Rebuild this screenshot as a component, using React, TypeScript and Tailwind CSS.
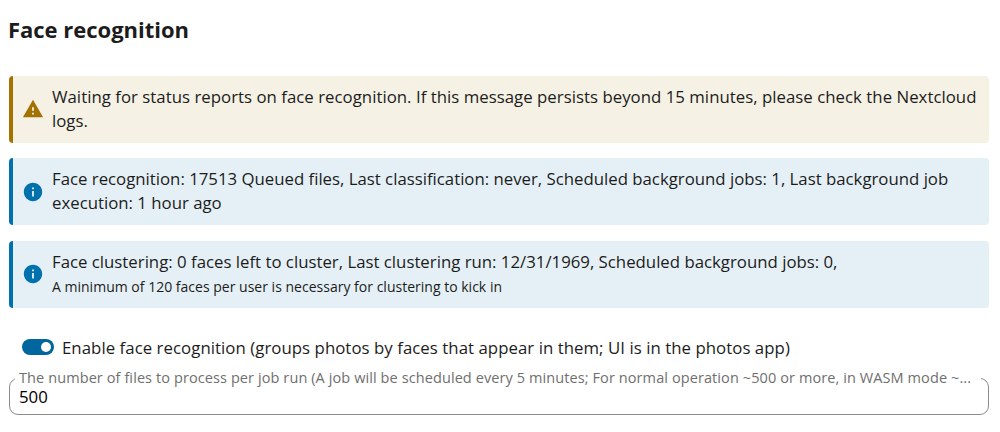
import type { ReactNode } from "react";
import { MdInfo, MdWarning } from "react-icons/md";

type NoteCardProps = {
  type: "warning" | "info";
  children: ReactNode;
};

function NoteCard({ type, children }: NoteCardProps) {
  const isWarning = type === "warning";
  return (
    <section
      className={`flex h-[67px] items-center rounded border-l-4 ${
        isWarning
          ? "border-[#a37200] bg-[#f5f1e4]"
          : "border-[#0071ad] bg-[#e5f0f6]"
      }`}
    >
      <span className="ml-[9px] flex w-[22px] justify-center">
        {isWarning ? (
          <MdWarning className="h-[22px] w-[22px] text-[#a37200]" />
        ) : (
          <MdInfo className="h-[22px] w-[22px] text-[#0071ad]" />
        )}
      </span>
      <div className="ml-2 pb-[0.4px] whitespace-nowrap leading-6">
        {children}
      </div>
    </section>
  );
}

function App() {
  return (
    <main className="h-[432px] overflow-hidden bg-white pl-[9px] pr-[11px] pt-[13px] font-['Open_Sans','Noto_Sans',sans-serif] text-[16.8px] text-[#1c1c1c]">
      <h2 className="-ml-px h-[62.6px] text-[22px] leading-8 font-bold tracking-[-0.02px]">
        Face recognition
      </h2>

      <div className="flex flex-col gap-[15.5px]">
        <NoteCard type="warning">
          <p className="tracking-[0.025px]">
            Waiting for status reports on face recognition. If this message
            persists beyond 15 minutes, please check the Nextcloud
          </p>
          <p>logs.</p>
        </NoteCard>
        <NoteCard type="info">
          <p className="tracking-[-0.005px]">
            Face recognition: 17513 Queued files, Last classification: never,
            Scheduled background jobs: 1, Last background job
          </p>
          <p>execution: 1 hour ago</p>
        </NoteCard>
        <NoteCard type="info">
          <p>
            Face clustering: 0 faces left to cluster, Last clustering run:
            12/31/1969, Scheduled background jobs: 0,
          </p>
          <p className="pt-px text-[14px] leading-[23px] tracking-[0.01px]">
            A minimum of 120 faces per user is necessary for clustering to kick
            in
          </p>
        </NoteCard>
      </div>

      <label className="mt-7 ml-[13px] flex h-6 items-center gap-2 whitespace-nowrap tracking-[0.05px]">
        <span className="-mt-px flex h-4 w-8 shrink-0 items-center justify-end rounded-full bg-[#00679e] pr-[3px]">
          <span className="h-2.5 w-2.5 rounded-full bg-white" />
        </span>
        Enable face recognition (groups photos by faces that appear in them; UI
        is in the photos app)
      </label>

      <div className="relative mt-[18px] h-[37px] rounded-[9px] border border-[#8c8c8c]">
        <label className="absolute -top-[11px] right-[7px] left-[5px] block bg-white pl-1 text-[14.5px] leading-5 tracking-[0.095px] whitespace-nowrap text-[#6f6f6f]">
          The number of files to process per job run (A job will be scheduled
          every 5 minutes; For normal operation ~500 or more, in WASM mode ~...
        </label>
        <input
          type="text"
          defaultValue="500"
          className="mt-[6px] block h-6 w-full bg-transparent pl-[9px] text-[16.8px] text-black outline-none"
        />
      </div>
    </main>
  );
}

export default App;
